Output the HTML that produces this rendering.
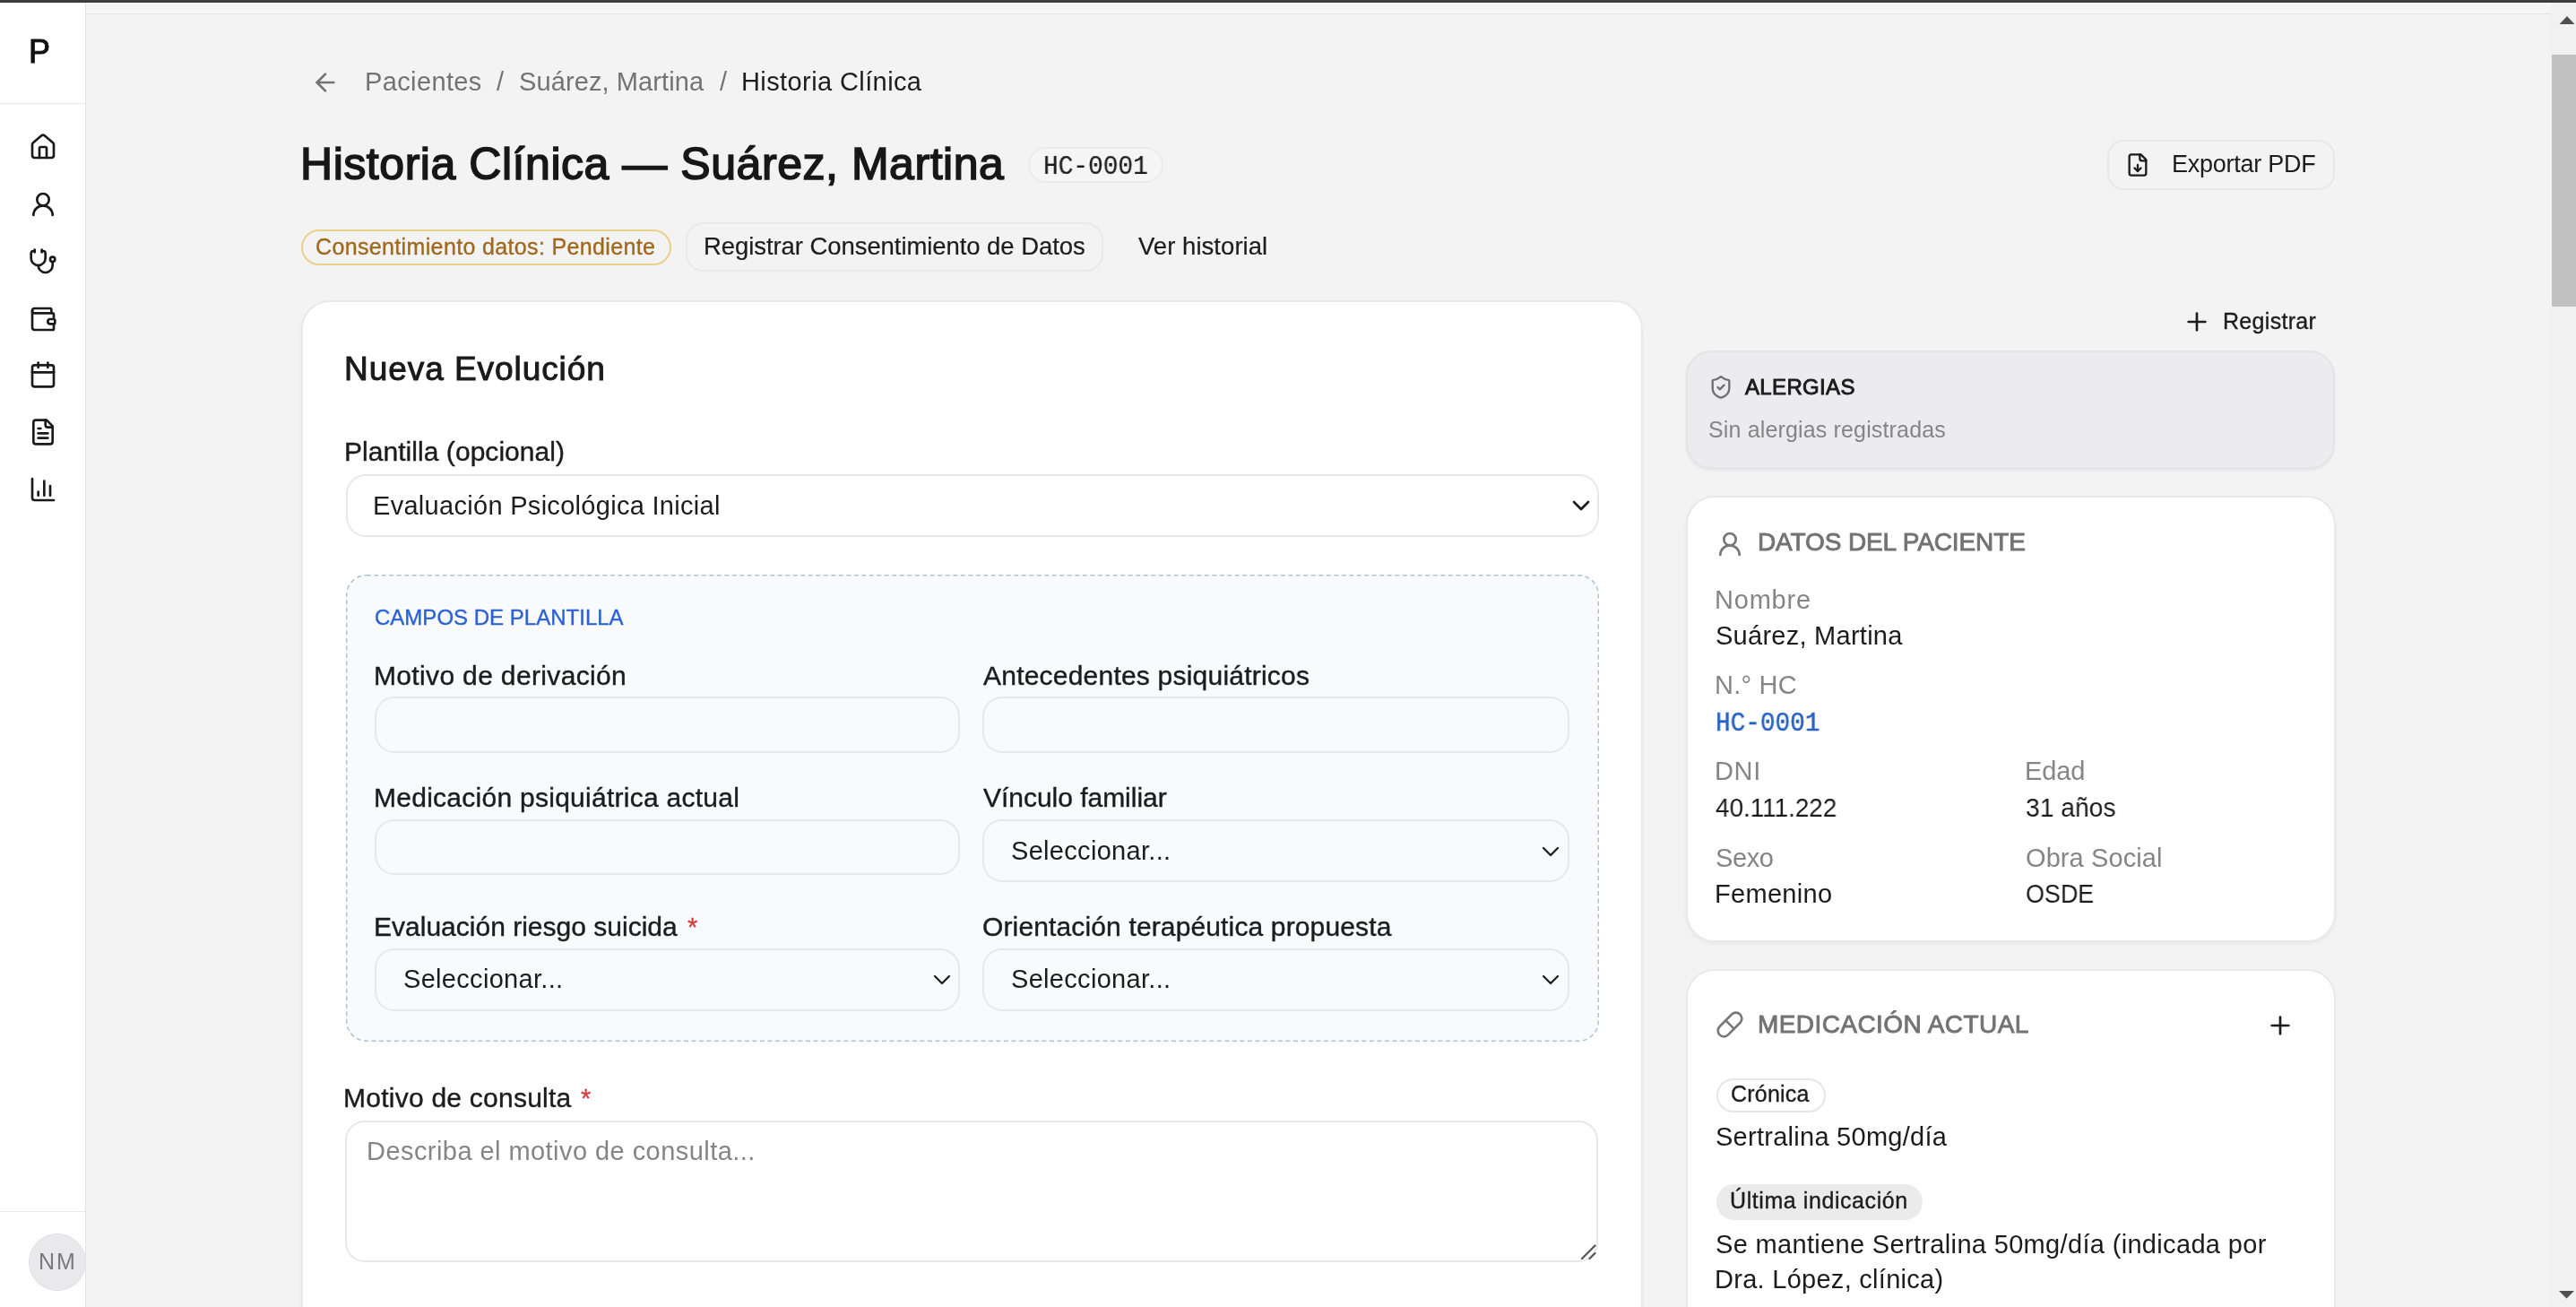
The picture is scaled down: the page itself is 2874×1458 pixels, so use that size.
<!DOCTYPE html>
<html lang="es"><head><meta charset="utf-8"><title>Historia Clínica — Suárez, Martina</title>
<style>
html,body{margin:0;padding:0;width:2874px;height:1458px;overflow:hidden;background:#f3f3f3;}
body{position:relative;font-family:"Liberation Sans", sans-serif;}
.t{position:absolute;white-space:nowrap;will-change:transform;}
.b{position:absolute;}
.i{position:absolute;display:block;}
@media (max-width:1500px){html{zoom:0.5;}}
</style></head><body>
<div class="b" style="left:0.0px;top:0.0px;width:2874.0px;height:3.0px;background:#3d3d3d"></div>
<div class="b" style="left:0.0px;top:3.0px;width:95.0px;height:1455.0px;background:#ffffff"></div>
<div class="b" style="left:95.0px;top:3.0px;width:1.0px;height:1455.0px;background:#e3e3e3"></div>
<div class="b" style="left:0.0px;top:115.0px;width:95.0px;height:1.0px;background:#e8e8e8"></div>
<div class="b" style="left:0.0px;top:1351.0px;width:95.0px;height:1.0px;background:#e8e8e8"></div>
<div class="t" style="left:32.2px;top:40.1px;font-size:36px;line-height:36px;color:#111111;-webkit-text-stroke:1.0px #111111;">P</div>
<svg class="i" style="left:32.0px;top:147.7px;width:32px;height:32px;color:#1a1a1a" viewBox="0 0 24 24" fill="none" stroke="currentColor" stroke-width="2" stroke-linecap="round" stroke-linejoin="round"><path d="M15 21v-8a1 1 0 0 0-1-1h-4a1 1 0 0 0-1 1v8"/><path d="M3 10a2 2 0 0 1 .709-1.528l7-5.999a2 2 0 0 1 2.582 0l7 5.999A2 2 0 0 1 21 10v9a2 2 0 0 1-2 2H5a2 2 0 0 1-2-2z"/></svg>
<svg class="i" style="left:32.0px;top:211.7px;width:32px;height:32px;color:#1a1a1a" viewBox="0 0 24 24" fill="none" stroke="currentColor" stroke-width="2" stroke-linecap="round" stroke-linejoin="round"><circle cx="12" cy="8" r="5"/><path d="M20 21a8 8 0 0 0-16 0"/></svg>
<svg class="i" style="left:32.0px;top:275.7px;width:32px;height:32px;color:#1a1a1a" viewBox="0 0 24 24" fill="none" stroke="currentColor" stroke-width="2" stroke-linecap="round" stroke-linejoin="round"><path d="M11 2v2"/><path d="M5 2v2"/><path d="M5 3H4a2 2 0 0 0-2 2v4a6 6 0 0 0 12 0V5a2 2 0 0 0-2-2h-1"/><path d="M8 15a6 6 0 0 0 12 0v-3"/><circle cx="20" cy="10" r="2"/></svg>
<svg class="i" style="left:32.0px;top:339.7px;width:32px;height:32px;color:#1a1a1a" viewBox="0 0 24 24" fill="none" stroke="currentColor" stroke-width="2" stroke-linecap="round" stroke-linejoin="round"><path d="M19 7V4a1 1 0 0 0-1-1H5a2 2 0 0 0 0 4h15a1 1 0 0 1 1 1v4h-3a2 2 0 0 0 0 4h3a1 1 0 0 0 1-1v-2a1 1 0 0 0-1-1"/><path d="M3 5v14a2 2 0 0 0 2 2h15a1 1 0 0 0 1-1v-4"/></svg>
<svg class="i" style="left:32.0px;top:402.2px;width:32px;height:32px;color:#1a1a1a" viewBox="0 0 24 24" fill="none" stroke="currentColor" stroke-width="2" stroke-linecap="round" stroke-linejoin="round"><path d="M8 2v4"/><path d="M16 2v4"/><rect width="18" height="18" x="3" y="4" rx="2"/><path d="M3 10h18"/></svg>
<svg class="i" style="left:32.0px;top:466.1px;width:32px;height:32px;color:#1a1a1a" viewBox="0 0 24 24" fill="none" stroke="currentColor" stroke-width="2" stroke-linecap="round" stroke-linejoin="round"><path d="M15 2H6a2 2 0 0 0-2 2v16a2 2 0 0 0 2 2h12a2 2 0 0 0 2-2V7Z"/><path d="M14 2v4a2 2 0 0 0 2 2h4"/><path d="M10 9H8"/><path d="M16 13H8"/><path d="M16 17H8"/></svg>
<svg class="i" style="left:32.0px;top:530.0px;width:32px;height:32px;color:#1a1a1a" viewBox="0 0 24 24" fill="none" stroke="currentColor" stroke-width="2" stroke-linecap="round" stroke-linejoin="round"><path d="M3 3v16a2 2 0 0 0 2 2h16"/><path d="M18 17V9"/><path d="M13 17V5"/><path d="M8 17v-3"/></svg>
<div class="b" style="left:0;top:1340px;width:95px;height:118px;overflow:hidden"><div style="position:absolute;left:32px;top:36px;width:64px;height:64px;border-radius:50%;background:#e9e9eb;box-sizing:border-box;border:1.5px solid #e0e0e2;"></div></div>
<div class="t" style="left:43.4px;top:1394.6px;font-size:25px;line-height:25px;color:#7a7a7a;letter-spacing:2.0px;">NM</div>
<div class="b" style="left:96.0px;top:3.0px;width:2750.0px;height:1.0px;background:#ffffff"></div>
<div class="b" style="left:96.0px;top:4.0px;width:2750.0px;height:11.0px;background:#f5f5f5"></div>
<div class="b" style="left:96.0px;top:15.0px;width:2750.0px;height:1.0px;background:#e3e3e3"></div>
<div class="b" style="left:2846.0px;top:3.0px;width:28.0px;height:1455.0px;background:#f1f1f1"></div>
<div class="b" style="left:2847.0px;top:61.0px;width:27.0px;height:281.0px;background:#c1c1c1"></div>
<svg class="i" style="left:2846px;top:3px;width:28px;height:40px" viewBox="0 0 28 40"><path d="M9.5 24 L18 15 L26.5 24 Z" fill="#505050"/></svg>
<svg class="i" style="left:2846px;top:1418px;width:28px;height:40px" viewBox="0 0 28 40"><path d="M9 22 L17.5 30.5 L26 22 Z" fill="#505050"/></svg>
<svg class="i" style="left:347.3px;top:76.1px;width:32px;height:32px;color:#737373" viewBox="0 0 24 24" fill="none" stroke="currentColor" stroke-width="2" stroke-linecap="round" stroke-linejoin="round"><path d="m12 19-7-7 7-7"/><path d="M19 12H5"/></svg>
<div class="t" style="left:406.5px;top:77.2px;font-size:29px;line-height:29px;color:#737373;letter-spacing:0.375px;">Pacientes</div>
<div class="t" style="left:554.0px;top:77.2px;font-size:29px;line-height:29px;color:#737373;">/</div>
<div class="t" style="left:578.5px;top:77.2px;font-size:29px;line-height:29px;color:#737373;letter-spacing:0.107px;">Suárez, Martina</div>
<div class="t" style="left:802.6px;top:77.2px;font-size:29px;line-height:29px;color:#737373;">/</div>
<div class="t" style="left:827.0px;top:77.2px;font-size:29px;line-height:29px;color:#1c1c1c;letter-spacing:0.4px;">Historia Clínica</div>
<div class="t" style="left:334.5px;top:157.6px;font-size:50px;line-height:50px;color:#171717;letter-spacing:0.545px;-webkit-text-stroke:1.6px #171717;">Historia Clínica — Suárez, Martina</div>
<div class="b" style="left:1147.0px;top:164.0px;width:151.0px;height:39.5px;border:2px solid #ebebeb;border-radius:20px;background:#f5f5f5;box-sizing:border-box"></div>
<div class="t" style="left:1164.1px;top:170.6px;font-size:30px;line-height:30px;color:#1c1c1c;-webkit-text-stroke:0.2px #1c1c1c;font-family:'Liberation Mono', monospace;transform:scaleX(0.9268);transform-origin:0 0;">HC-0001</div>
<div class="b" style="left:2350.5px;top:155.6px;width:254.5px;height:56.0px;border:2px solid #e8e8e8;border-radius:18px;box-sizing:border-box"></div>
<svg class="i" style="left:2371.4px;top:169.8px;width:28px;height:28px;color:#1c1c1c" viewBox="0 0 24 24" fill="none" stroke="currentColor" stroke-width="2" stroke-linecap="round" stroke-linejoin="round"><path d="M15 2H6a2 2 0 0 0-2 2v16a2 2 0 0 0 2 2h12a2 2 0 0 0 2-2V7Z"/><path d="M14 2v4a2 2 0 0 0 2 2h4"/><path d="M12 18v-6"/><path d="m9 15 3 3 3-3"/></svg>
<div class="t" style="left:2423.0px;top:169.5px;font-size:27px;line-height:27px;color:#1c1c1c;letter-spacing:-0.245px;">Exportar PDF</div>
<div class="b" style="left:336.0px;top:256.0px;width:412.6px;height:39.7px;border:2px solid #ebd08a;border-radius:20px;box-sizing:border-box"></div>
<div class="t" style="left:352.0px;top:263.2px;font-size:25px;line-height:25px;color:#a0681c;letter-spacing:0.357px;-webkit-text-stroke:0.35px #a0681c;">Consentimiento datos: Pendiente</div>
<div class="b" style="left:764.7px;top:248.4px;width:466.1px;height:54.9px;border:2px solid #e9e9e9;border-radius:20px;box-sizing:border-box"></div>
<div class="t" style="left:784.7px;top:260.8px;font-size:27.5px;line-height:27.5px;color:#1c1c1c;letter-spacing:-0.072px;-webkit-text-stroke:0.2px #1c1c1c;">Registrar Consentimiento de Datos</div>
<div class="t" style="left:1269.7px;top:260.8px;font-size:27.5px;line-height:27.5px;color:#1c1c1c;letter-spacing:0.042px;-webkit-text-stroke:0.2px #1c1c1c;">Ver historial</div>
<div class="b" style="left:335.5px;top:334.5px;width:1497.5px;height:1165.5px;background:#fff;border:2px solid #e9e9e9;border-radius:32px;box-sizing:border-box;box-shadow:0 2px 4px rgba(0,0,0,0.03)"></div>
<div class="t" style="left:384.0px;top:393.2px;font-size:37px;line-height:37px;color:#1a1a1a;letter-spacing:0.943px;-webkit-text-stroke:1.0px #1a1a1a;">Nueva Evolución</div>
<div class="t" style="left:384.0px;top:489.3px;font-size:30px;line-height:30px;color:#1c1c1c;letter-spacing:0.047px;-webkit-text-stroke:0.4px #1c1c1c;">Plantilla (opcional)</div>
<div class="b" style="left:385.5px;top:528.6px;width:1398.0px;height:70.9px;border:2px solid #e8e8e8;border-radius:22px;box-sizing:border-box"></div>
<div class="t" style="left:416.2px;top:549.5px;font-size:29px;line-height:29px;color:#1c1c1c;letter-spacing:0.297px;">Evaluación Psicológica Inicial</div>
<svg class="i" style="left:1747.8px;top:548.0px;width:32px;height:32px;color:#1c1c1c" viewBox="0 0 24 24" fill="none" stroke="currentColor" stroke-width="2" stroke-linecap="round" stroke-linejoin="round"><path d="m6 9 6 6 6-6"/></svg>
<svg class="i" style="left:385.5px;top:640.5px;width:1398px;height:521px" viewBox="0 0 1398 521"><rect x="0.75" y="0.75" width="1396.5" height="519.5" rx="22" ry="22" fill="#f8fafc" stroke="#a9c6d3" stroke-width="1.5" stroke-dasharray="5 3.5"/></svg>
<div class="t" style="left:417.7px;top:676.5px;font-size:24px;line-height:24px;color:#2a61d4;letter-spacing:0.011px;-webkit-text-stroke:0.35px #2a61d4;">CAMPOS DE PLANTILLA</div>
<div class="t" style="left:416.7px;top:739.0px;font-size:30px;line-height:30px;color:#1c1c1c;letter-spacing:0.347px;-webkit-text-stroke:0.4px #1c1c1c;">Motivo de derivación</div>
<div class="t" style="left:1097.3px;top:739.0px;font-size:30px;line-height:30px;color:#1c1c1c;letter-spacing:0.216px;-webkit-text-stroke:0.4px #1c1c1c;">Antecedentes psiquiátricos</div>
<div class="b" style="left:417.6px;top:777.3px;width:653.8px;height:63.2px;border:2px solid #e7e8ea;border-radius:22px;box-sizing:border-box"></div>
<div class="b" style="left:1096.0px;top:777.3px;width:655.0px;height:63.2px;border:2px solid #e7e8ea;border-radius:22px;box-sizing:border-box"></div>
<div class="t" style="left:416.7px;top:875.0px;font-size:30px;line-height:30px;color:#1c1c1c;letter-spacing:0.266px;-webkit-text-stroke:0.4px #1c1c1c;">Medicación psiquiátrica actual</div>
<div class="t" style="left:1097.3px;top:874.7px;font-size:30px;line-height:30px;color:#1c1c1c;letter-spacing:-0.027px;-webkit-text-stroke:0.4px #1c1c1c;">Vínculo familiar</div>
<div class="b" style="left:417.6px;top:913.8px;width:653.8px;height:62.4px;border:2px solid #e7e8ea;border-radius:22px;box-sizing:border-box"></div>
<div class="b" style="left:1096.0px;top:913.9px;width:655.0px;height:70.3px;border:2px solid #e7e8ea;border-radius:22px;box-sizing:border-box"></div>
<div class="t" style="left:1128.0px;top:935.3px;font-size:29px;line-height:29px;color:#1c1c1c;letter-spacing:0.308px;">Seleccionar...</div>
<svg class="i" style="left:1714.0px;top:933.6px;width:32px;height:32px;color:#1c1c1c" viewBox="0 0 24 24" fill="none" stroke="currentColor" stroke-width="1.7" stroke-linecap="round" stroke-linejoin="round"><path d="m6 9 6 6 6-6"/></svg>
<div class="t" style="left:416.7px;top:1018.7px;font-size:30px;line-height:30px;color:#1c1c1c;letter-spacing:0.008px;-webkit-text-stroke:0.4px #1c1c1c;">Evaluación riesgo suicida</div>
<div class="t" style="left:766.7px;top:1019.7px;font-size:29px;line-height:29px;color:#d23c3c;-webkit-text-stroke:0.3px #d23c3c;">*</div>
<div class="t" style="left:1096.3px;top:1018.7px;font-size:30px;line-height:30px;color:#1c1c1c;letter-spacing:0.138px;-webkit-text-stroke:0.4px #1c1c1c;">Orientación terapéutica propuesta</div>
<div class="b" style="left:417.6px;top:1057.8px;width:653.8px;height:70.0px;border:2px solid #e7e8ea;border-radius:22px;box-sizing:border-box"></div>
<div class="b" style="left:1096.0px;top:1057.8px;width:655.0px;height:70.0px;border:2px solid #e7e8ea;border-radius:22px;box-sizing:border-box"></div>
<div class="t" style="left:449.8px;top:1078.3px;font-size:29px;line-height:29px;color:#1c1c1c;letter-spacing:0.308px;">Seleccionar...</div>
<div class="t" style="left:1128.0px;top:1078.3px;font-size:29px;line-height:29px;color:#1c1c1c;letter-spacing:0.308px;">Seleccionar...</div>
<svg class="i" style="left:1035.0px;top:1076.9px;width:32px;height:32px;color:#1c1c1c" viewBox="0 0 24 24" fill="none" stroke="currentColor" stroke-width="1.7" stroke-linecap="round" stroke-linejoin="round"><path d="m6 9 6 6 6-6"/></svg>
<svg class="i" style="left:1714.0px;top:1076.9px;width:32px;height:32px;color:#1c1c1c" viewBox="0 0 24 24" fill="none" stroke="currentColor" stroke-width="1.7" stroke-linecap="round" stroke-linejoin="round"><path d="m6 9 6 6 6-6"/></svg>
<div class="t" style="left:383.1px;top:1209.9px;font-size:30px;line-height:30px;color:#1c1c1c;letter-spacing:0.241px;-webkit-text-stroke:0.4px #1c1c1c;">Motivo de consulta</div>
<div class="t" style="left:647.8px;top:1210.9px;font-size:29px;line-height:29px;color:#d23c3c;-webkit-text-stroke:0.3px #d23c3c;">*</div>
<div class="b" style="left:385.1px;top:1249.7px;width:1398.4px;height:158.7px;border:2px solid #e8e8e8;border-radius:22px;box-sizing:border-box"></div>
<div class="t" style="left:408.6px;top:1269.9px;font-size:29px;line-height:29px;color:#858585;letter-spacing:0.444px;">Describa el motivo de consulta...</div>
<svg class="i" style="left:1760px;top:1385px;width:24px;height:24px" viewBox="0 0 24 24"><path d="M5 19 L19.5 4.5 M13.5 19 L19.5 13" stroke="#555" stroke-width="2.2" stroke-linecap="round"/></svg>
<svg class="i" style="left:2434.8px;top:343.0px;width:32px;height:32px;color:#1c1c1c" viewBox="0 0 24 24" fill="none" stroke="currentColor" stroke-width="2" stroke-linecap="round" stroke-linejoin="round"><path d="M5 12h14"/><path d="M12 5v14"/></svg>
<div class="t" style="left:2480.2px;top:345.5px;font-size:25px;line-height:25px;color:#1c1c1c;letter-spacing:0.312px;-webkit-text-stroke:0.35px #1c1c1c;">Registrar</div>
<div class="b" style="left:1880.6px;top:390.5px;width:724.9px;height:132.3px;background:#ececee;border:2px solid #e4e4e6;border-radius:28px;box-sizing:border-box;box-shadow:0 2px 3px rgba(0,0,0,0.06)"></div>
<svg class="i" style="left:1905.8px;top:418.0px;width:28px;height:28px;color:#707070" viewBox="0 0 24 24" fill="none" stroke="currentColor" stroke-width="2" stroke-linecap="round" stroke-linejoin="round"><path d="M20 13c0 5-3.5 7.5-7.66 8.95a1 1 0 0 1-.67-.01C7.5 20.5 4 18 4 13V6a1 1 0 0 1 1-1c2 0 4.5-1.2 6.24-2.72a1.17 1.17 0 0 1 1.52 0C14.51 3.81 17 5 19 5a1 1 0 0 1 1 1z"/><path d="m9 12 2 2 4-4"/></svg>
<div class="t" style="left:1946.9px;top:419.7px;font-size:24px;line-height:24px;color:#1a1a1a;letter-spacing:0.343px;-webkit-text-stroke:0.9px #1a1a1a;">ALERGIAS</div>
<div class="t" style="left:1906.0px;top:466.5px;font-size:25px;line-height:25px;color:#858585;letter-spacing:0.152px;">Sin alergias registradas</div>
<div class="b" style="left:1881.0px;top:552.6px;width:724.5px;height:498.9px;background:#fff;border:2px solid #e9e9e9;border-radius:32px;box-sizing:border-box;box-shadow:0 2px 4px rgba(0,0,0,0.05)"></div>
<svg class="i" style="left:1913.8px;top:590.6px;width:32px;height:32px;color:#777777" viewBox="0 0 24 24" fill="none" stroke="currentColor" stroke-width="2" stroke-linecap="round" stroke-linejoin="round"><circle cx="12" cy="8" r="5"/><path d="M20 21a8 8 0 0 0-16 0"/></svg>
<div class="t" style="left:1961.0px;top:591.3px;font-size:28px;line-height:28px;color:#737373;letter-spacing:-0.118px;-webkit-text-stroke:0.9px #737373;">DATOS DEL PACIENTE</div>
<div class="t" style="left:1913.1px;top:654.8px;font-size:29px;line-height:29px;color:#858585;letter-spacing:0.78px;">Nombre</div>
<div class="t" style="left:1914.1px;top:694.8px;font-size:29px;line-height:29px;color:#1c1c1c;letter-spacing:0.264px;">Suárez, Martina</div>
<div class="t" style="left:1913.1px;top:750.2px;font-size:29px;line-height:29px;color:#858585;letter-spacing:0.22px;">N.° HC</div>
<div class="t" style="left:1914.2px;top:792.0px;font-size:30px;line-height:30px;color:#2b63c2;-webkit-text-stroke:0.5px #2b63c2;font-family:'Liberation Mono', monospace;transform:scaleX(0.9236);transform-origin:0 0;">HC-0001</div>
<div class="t" style="left:1913.1px;top:846.4px;font-size:29px;line-height:29px;color:#858585;letter-spacing:0.65px;">DNI</div>
<div class="t" style="left:2258.6px;top:846.4px;font-size:29px;line-height:29px;color:#858585;letter-spacing:-0.133px;">Edad</div>
<div class="t" style="left:1914.1px;top:886.7px;font-size:29px;line-height:29px;color:#1c1c1c;transform:scaleX(0.9604);transform-origin:0 0;">40.111.222</div>
<div class="t" style="left:2259.6px;top:886.7px;font-size:29px;line-height:29px;color:#1c1c1c;transform:scaleX(0.9743);transform-origin:0 0;">31 años</div>
<div class="t" style="left:1914.1px;top:942.7px;font-size:29px;line-height:29px;color:#858585;letter-spacing:-0.367px;">Sexo</div>
<div class="t" style="left:2259.6px;top:942.7px;font-size:29px;line-height:29px;color:#858585;letter-spacing:0.09px;">Obra Social</div>
<div class="t" style="left:1913.1px;top:982.6px;font-size:29px;line-height:29px;color:#1c1c1c;letter-spacing:0.3px;">Femenino</div>
<div class="t" style="left:2259.7px;top:982.6px;font-size:29px;line-height:29px;color:#1c1c1c;transform:scaleX(0.9275);transform-origin:0 0;">OSDE</div>
<div class="b" style="left:1881.0px;top:1081.3px;width:724.5px;height:518.7px;background:#fff;border:2px solid #e9e9e9;border-radius:32px;box-sizing:border-box"></div>
<svg class="i" style="left:1914.1px;top:1126.8px;width:32px;height:32px;color:#777777" viewBox="0 0 24 24" fill="none" stroke="currentColor" stroke-width="2" stroke-linecap="round" stroke-linejoin="round"><path d="m10.5 20.5 10-10a4.95 4.95 0 1 0-7-7l-10 10a4.95 4.95 0 1 0 7 7Z"/><path d="m8.5 8.5 7 7"/></svg>
<div class="t" style="left:1961.0px;top:1128.5px;font-size:28px;line-height:28px;color:#737373;letter-spacing:0.419px;-webkit-text-stroke:0.9px #737373;">MEDICACIÓN ACTUAL</div>
<svg class="i" style="left:2528.3px;top:1127.7px;width:32px;height:32px;color:#1c1c1c" viewBox="0 0 24 24" fill="none" stroke="currentColor" stroke-width="2" stroke-linecap="round" stroke-linejoin="round"><path d="M5 12h14"/><path d="M12 5v14"/></svg>
<div class="b" style="left:1914.5px;top:1202.6px;width:122.0px;height:38.8px;border:2px solid #e6e6e6;border-radius:20px;box-sizing:border-box;background:#fff"></div>
<div class="t" style="left:1930.8px;top:1208.4px;font-size:25px;line-height:25px;color:#1c1c1c;letter-spacing:0.2px;-webkit-text-stroke:0.35px #1c1c1c;">Crónica</div>
<div class="t" style="left:1914.1px;top:1254.4px;font-size:29px;line-height:29px;color:#1c1c1c;letter-spacing:0.267px;">Sertralina 50mg/día</div>
<div class="b" style="left:1914.5px;top:1321.3px;width:230.1px;height:39.4px;border-radius:20px;background:#ebebeb"></div>
<div class="t" style="left:1929.8px;top:1327.4px;font-size:25px;line-height:25px;color:#1c1c1c;letter-spacing:0.575px;-webkit-text-stroke:0.35px #1c1c1c;">Última indicación</div>
<div class="t" style="left:1914.1px;top:1374.0px;font-size:29px;line-height:29px;color:#1c1c1c;letter-spacing:0.332px;">Se mantiene Sertralina 50mg/día (indicada por</div>
<div class="t" style="left:1913.1px;top:1412.8px;font-size:29px;line-height:29px;color:#1c1c1c;letter-spacing:0.279px;">Dra. López, clínica)</div>

</body></html>
